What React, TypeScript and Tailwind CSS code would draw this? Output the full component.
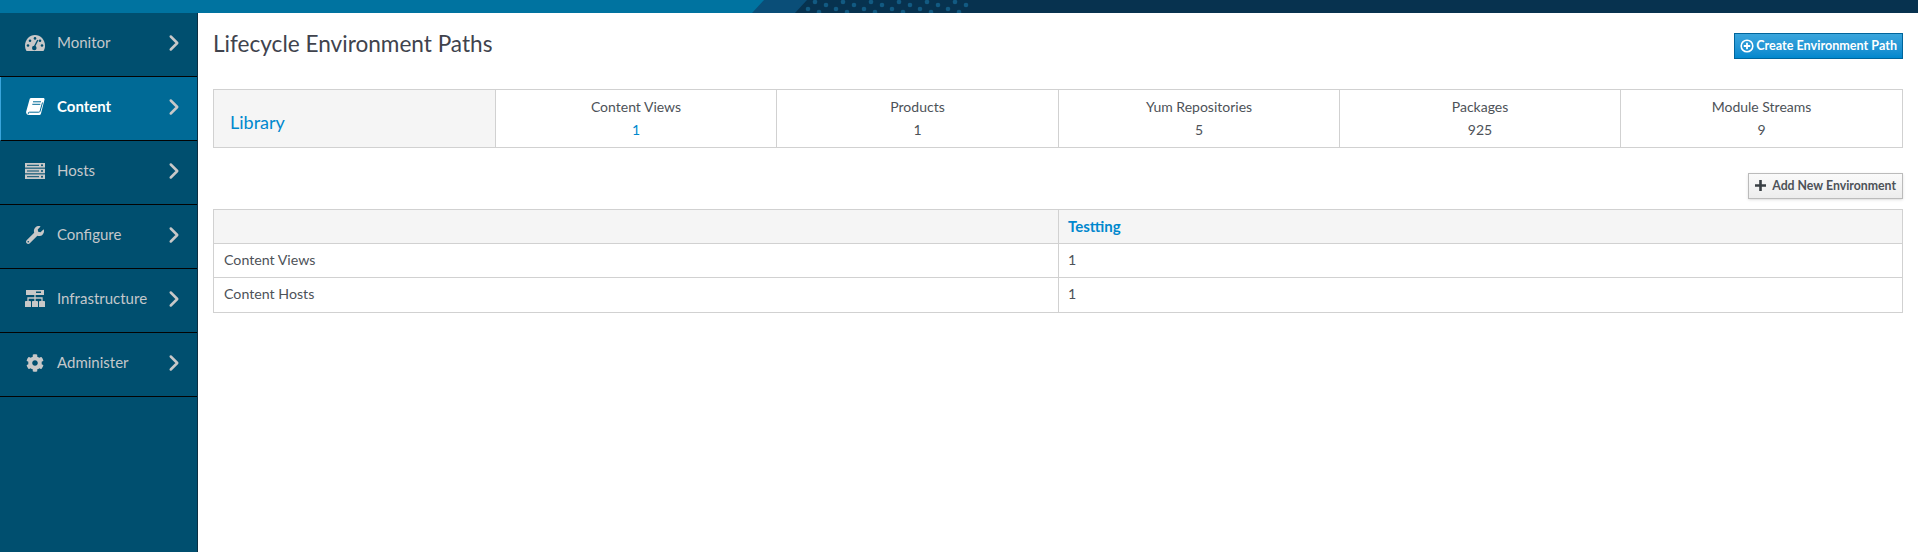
import React from "react";
import { ChevronRight } from "lucide-react";
import { FaWrench, FaCog } from "react-icons/fa";

function GaugeIcon({ dark }: { dark: string }) {
  return (
    <svg width="20" height="16" viewBox="0 0 20 16">
      <path d="M1.5 16C.5 14.5 0 12.5 0 10.5 0 4.7 4.5 0 10 0s10 4.7 10 10.5c0 2-.5 4-1.5 5.5z" fill="#c8c8c8" />
      <circle cx="3" cy="10.5" r="1.3" fill={dark} />
      <circle cx="5" cy="5.8" r="1.3" fill={dark} />
      <circle cx="10" cy="3.4" r="1.3" fill={dark} />
      <circle cx="15" cy="5.8" r="1.3" fill={dark} />
      <circle cx="17" cy="10.5" r="1.3" fill={dark} />
      <path d="M9.2 12 12.8 5" stroke={dark} strokeWidth="1.4" />
      <circle cx="9.3" cy="13" r="2.3" fill={dark} />
    </svg>
  );
}

function BookIcon() {
  return (
    <svg width="19" height="17" viewBox="0 0 19 17">
      <path d="M5 0h13l.6 1.2L15 15.5c-.3 1-1 1.5-2 1.5H3c-2 0-3.3-1.6-2.8-3.6L3.4 2C3.7.8 4 0 5 0z" fill="#fff" />
      <path d="M7 3.8h8M6.3 6.3h8" stroke="#006a96" strokeWidth="1" />
      <path d="M16.5 4.5 14 13.4c-.2.6-.6.8-1.2.8H3.5c-1.6 0-1.8 1.6-.4 1.6" fill="none" stroke="#006a96" strokeWidth="1" />
    </svg>
  );
}

function ServerIcon({ dark }: { dark: string }) {
  return (
    <svg width="20" height="16" viewBox="0 0 20 16">
      {[0, 5.7, 11.4].map((y) => (
        <g key={y}>
          <rect x="0" y={y} width="20" height="4.6" fill="#c8c8c8" />
          <rect x="2" y={y + 1.8} width="12" height="1" fill={dark} />
          <circle cx="17" cy={y + 2.3} r="1" fill={dark} />
        </g>
      ))}
    </svg>
  );
}

function SitemapIcon({ dark }: { dark: string }) {
  return (
    <svg width="20" height="17" viewBox="0 0 20 17">
      <rect x="1" y="0" width="18" height="5" fill="#c8c8c8" />
      <rect x="11" y="1.5" width="5" height="1.5" fill={dark} />
      <path d="M10 5v6M3 11V8h14v3" fill="none" stroke="#c8c8c8" strokeWidth="1.3" />
      <path d="M0 17v-5c0-.6.4-1 1-1h4c.6 0 1 .4 1 1v5zM7 17v-5c0-.6.4-1 1-1h4c.6 0 1 .4 1 1v5zM14 17v-5c0-.6.4-1 1-1h4c.6 0 1 .4 1 1v5z" fill="#c8c8c8" />
    </svg>
  );
}

const dark = "#004f6f";

const nav = [
  { label: "Monitor", icon: <GaugeIcon dark={dark} /> },
  { label: "Content", icon: <BookIcon />, active: true },
  { label: "Hosts", icon: <ServerIcon dark={dark} /> },
  { label: "Configure", icon: <FaWrench size={18} className="text-[#c8c8c8]" /> },
  { label: "Infrastructure", icon: <SitemapIcon dark={dark} /> },
  { label: "Administer", icon: <FaCog size={18} className="text-[#c8c8c8]" /> },
];

const stats = [
  { label: "Content Views", value: "1", link: true },
  { label: "Products", value: "1" },
  { label: "Yum Repositories", value: "5" },
  { label: "Packages", value: "925" },
  { label: "Module Streams", value: "9" },
];

function Banner() {
  const dots = [];
  for (let i = 0; i < 6; i++) {
    dots.push(<circle key={"a" + i} cx={815 + i * 28} cy={2} r={2.3} fill="#125a82" />);
    dots.push(<circle key={"b" + i} cx={826 + i * 28} cy={5} r={2.3} fill="#125a82" />);
    dots.push(<circle key={"c" + i} cx={808 + i * 28} cy={9} r={2.3} fill="#125a82" />);
    dots.push(<circle key={"d" + i} cx={819 + i * 28} cy={12} r={2.3} fill="#125a82" />);
  }
  return (
    <svg className="block w-full h-[13px] shrink-0" viewBox="0 0 1918 13" preserveAspectRatio="none">
      <rect width="1918" height="13" fill="#07324f" />
      <polygon points="0,0 807,0 795,13 0,13" fill="#0a4e78" />
      <polygon points="0,0 764,0 752,13 0,13" fill="#0073a0" />
      {dots}
    </svg>
  );
}

export default function App() {
  return (
    <div className="h-[552px] w-[1918px] flex flex-col bg-white overflow-hidden font-['Lato','Noto_Sans',sans-serif] text-[13px] text-[#4d5258]">
      <Banner />
      <div className="flex flex-1 min-h-0">
        <nav className="w-[198px] shrink-0 bg-[#004f6f] border-r border-[#0b2f42] flex flex-col">
          {nav.map(({ label, icon, active }) => (
            <div
              key={label}
              className={
                "h-[64px] shrink-0 flex items-center border-b border-[#030303] pb-[4px] " +
                (active ? "bg-[#006a96] border-l-[1px] border-l-[#39a5dc] text-white font-bold" : "text-[#c4c8cb]")
              }
            >
              <span className={"flex justify-center w-[20px] " + (active ? "ml-[24px]" : "ml-[25px]")}>{icon}</span>
              <span className="ml-[12px] text-[15px] flex-1">{label}</span>
              <ChevronRight size={26} strokeWidth={2.3} className="text-[#c8c8c8] mr-[10px] mt-[1px]" />
            </div>
          ))}
        </nav>

        <main className="flex-1 min-w-0 pl-[15px] pr-[15px]">
          <div className="flex items-start justify-between h-[76px]">
            <h1 className="text-[22.6px] leading-[28px] mt-[17px] text-[#40434d]">Lifecycle Environment Paths</h1>
            <button className="mt-[20px] h-[26px] px-[5px] flex items-center gap-[2px] bg-gradient-to-b from-[#39a5dc] to-[#0088ce] border border-[#00659c] text-white text-[12.6px] font-bold whitespace-nowrap">
              <svg width="14" height="14" viewBox="0 0 14 14" className="mb-[1px]">
                <circle cx="7" cy="7" r="5.8" fill="none" stroke="#fff" strokeWidth="1.6" />
                <path d="M7 3.8v6.4M3.8 7h6.4" stroke="#fff" strokeWidth="1.8" />
              </svg>
              Create Environment Path
            </button>
          </div>

          <div className="grid grid-cols-[282px_281px_282px_281px_281px_1fr] h-[59px] border border-[#d1d1d1]">
            <div className="bg-[#f5f5f5] border-r border-[#d1d1d1] flex items-center pl-[16px] pt-[7px] text-[18px] text-[#0088ce]">Library</div>
            {stats.map((s, i) => (
              <div key={s.label} className={"flex flex-col items-center pt-[5px] text-[14px] leading-[23px] " + (i < 4 ? "border-r border-[#d1d1d1]" : "")}>
                <span className="text-[#4d5258]">{s.label}</span>
                <span className={s.link ? "text-[#0088ce]" : "text-[#4d5258]"}>{s.value}</span>
              </div>
            ))}
          </div>

          <div className="flex justify-end mt-[25px] mb-[10px]">
            <button className="h-[26px] px-[6px] flex items-center gap-[6px] bg-gradient-to-b from-[#fafafa] to-[#ededed] border border-[#bbbbbb] shadow-sm text-[12.3px] font-bold text-[#4d5258] whitespace-nowrap">
              <svg width="11" height="11" viewBox="0 0 11 11" className="mb-[1px]">
                <path d="M5.5 0v11M0 5.5h11" stroke="#393f44" strokeWidth="2.6" />
              </svg>
              Add New Environment
            </button>
          </div>

          <table className="w-full table-fixed border-collapse border border-[#d1d1d1] text-[14.2px]">
            <colgroup>
              <col className="w-[845px]" />
              <col />
            </colgroup>
            <tbody>
              <tr className="h-[34px] bg-[#f5f5f5]">
                <td className="border border-[#d1d1d1]" />
                <td className="border border-[#d1d1d1] px-[9px] pb-[1px] text-[15px] font-bold text-[#0088ce]">Testting</td>
              </tr>
              <tr className="h-[34px]">
                <td className="border border-[#d1d1d1] px-[10px] pb-[2px]">Content Views</td>
                <td className="border border-[#d1d1d1] px-[9px] pb-[2px]">1</td>
              </tr>
              <tr className="h-[35px]">
                <td className="border border-[#d1d1d1] px-[10px] pb-[2px]">Content Hosts</td>
                <td className="border border-[#d1d1d1] px-[9px] pb-[2px]">1</td>
              </tr>
            </tbody>
          </table>
        </main>
      </div>
    </div>
  );
}
